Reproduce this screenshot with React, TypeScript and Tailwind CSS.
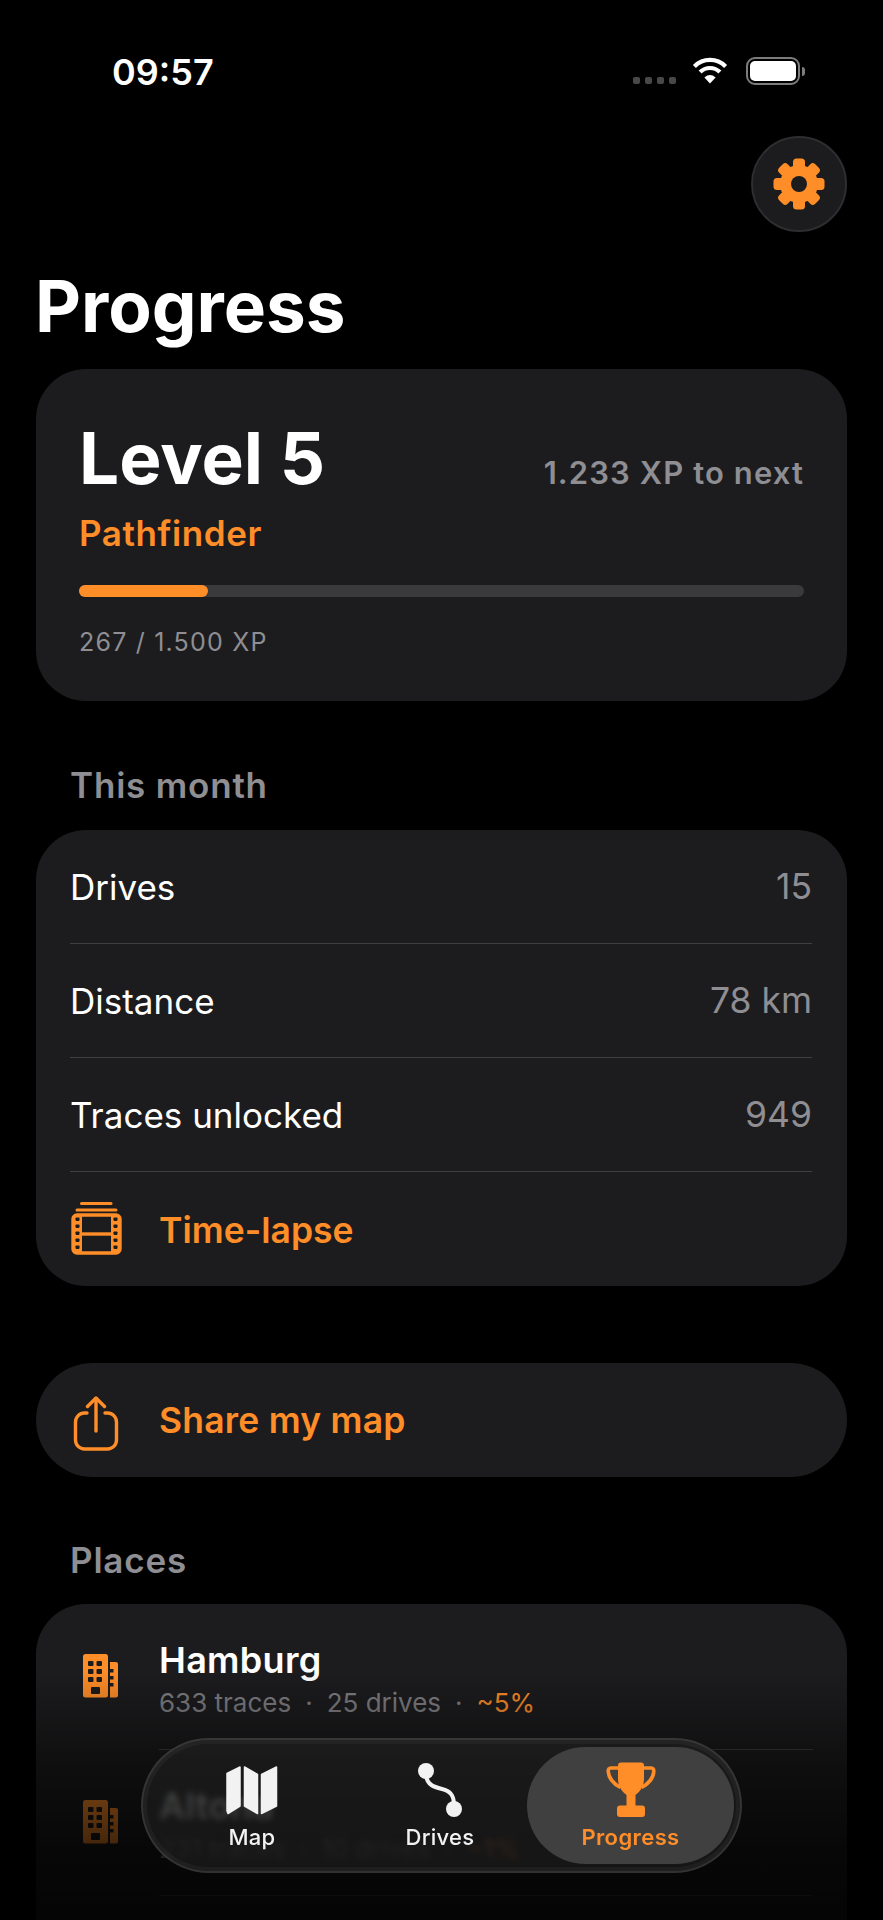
const FONT = "font-['Inter',_'Liberation_Sans',_sans-serif]";

const GearIcon = () => (
  <svg width="52" height="52" viewBox="-26 -26 52 52">
    {[0, 45, 90, 135, 180, 225, 270, 315].map((deg) => (
      <rect key={deg} x="-6" y="-25.5" width="12" height="14" rx="3.5" fill="#ff8d28" transform={`rotate(${deg})`} />
    ))}
    <circle r="19" fill="#ff8d28" />
    <circle r="8" fill="#1c1c1e" />
  </svg>
);

const WifiIcon = () => (
  <svg width="36" height="27" viewBox="0 0 36 27" fill="none">
    <path d="M2.4 9.4A22 22 0 0 1 33.6 9.4" stroke="#fff" strokeWidth="4.2" />
    <path d="M8.1 15.1A14 14 0 0 1 27.9 15.1" stroke="#fff" strokeWidth="4.2" />
    <path d="M18 26.5L12.4 20.4Q18 15.6 23.6 20.4Z" fill="#fff" />
  </svg>
);

const FilmIcon = () => (
  <svg width="52" height="54" viewBox="0 0 52 54" fill="none">
    <path d="M10.5 2.5H40" stroke="#ff8d28" strokeWidth="3" strokeLinecap="round" />
    <path d="M6 9H45" stroke="#ff8d28" strokeWidth="3" strokeLinecap="round" />
    <rect x="2" y="14" width="47" height="38" rx="4" stroke="#ff8d28" strokeWidth="3.4" />
    <rect x="2" y="14" width="9" height="38" fill="#ff8d28" />
    <rect x="40" y="14" width="9" height="38" fill="#ff8d28" />
    <path d="M11 33H40" stroke="#ff8d28" strokeWidth="3.4" />
    {[17.5, 24.5, 31.5, 38.5, 45.5].map((y) => (
      <g key={y} fill="#1c1c1e">
        <rect x="4.5" y={y - 1} width="4" height="3.4" rx="0.8" />
        <rect x="42.5" y={y - 1} width="4" height="3.4" rx="0.8" />
      </g>
    ))}
  </svg>
);

const ShareIcon = () => (
  <svg width="46" height="56" viewBox="0 0 46 56" fill="none" stroke="#ff8d28" strokeWidth="3.4" strokeLinecap="round" strokeLinejoin="round">
    <path d="M14 17H11.5A9 9 0 0 0 2.5 26V44A9 9 0 0 0 11.5 53H34.5A9 9 0 0 0 43.5 44V26A9 9 0 0 0 34.5 17H32" />
    <path d="M23 35V2.5" />
    <path d="M14.5 10.5L23 2L31.5 10.5" />
  </svg>
);

const BuildingIcon = ({ className }: { className?: string }) => (
  <svg width="36" height="44" viewBox="0 0 36 44" className={className}>
    <rect x="0" y="0" width="25" height="43.5" rx="2.5" fill="#ff8d28" />
    <path d="M27 8H33Q35 8 35 10V41.5Q35 43.5 33 43.5H27Z" fill="#ff8d28" />
    {[7, 15, 23].map((y) => (
      <g key={y} fill="#1c1c1e">
        <rect x="5" y={y} width="5.5" height="5" rx="1" />
        <rect x="13.5" y={y} width="5.5" height="5" rx="1" />
      </g>
    ))}
    <rect x="8" y="33" width="9" height="7" rx="1" fill="#1c1c1e" />
    {[15, 22, 29].map((y) => (
      <rect key={y} x="27" y={y} width="3.5" height="3.5" fill="#1c1c1e" />
    ))}
  </svg>
);

const MapIcon = () => (
  <svg width="52" height="49" viewBox="0 0 52 49" fill="#f2f2f2" stroke="#f2f2f2" strokeWidth="1.5" strokeLinejoin="round">
    <path d="M1 7.5L14 1V40L2 47.5L1 45Z" />
    <path d="M18.5 1L31.5 8.5V47.5L18.5 40Z" />
    <path d="M35.5 8.5L50.5 1V40L35.5 47.5Z" />
  </svg>
);

const DrivesIcon = () => (
  <svg width="46" height="56" viewBox="0 0 46 56" fill="none">
    <circle cx="9" cy="9" r="8" fill="#f2f2f2" />
    <circle cx="37" cy="47" r="8" fill="#f2f2f2" />
    <path d="M9 13C10 23 17 25 25 27C33 29 37 33 37 43" stroke="#f2f2f2" strokeWidth="4" />
  </svg>
);

const TrophyIcon = () => (
  <svg width="50" height="56" viewBox="0 0 50 56" fill="none">
    <path d="M12 3.5Q12 .5 15 .5H35Q38 .5 38 3.5V17C38 26 32 31 29.5 33V44H20.5V33C18 31 12 26 12 17Z" fill="#ff8d28" />
    <rect x="11" y="43.5" width="28" height="11.5" rx="3" fill="#ff8d28" />
    <path d="M12 6H5Q2 6 2.2 9.5C2.8 17 8 22 14.5 25.5" stroke="#ff8d28" strokeWidth="3.6" />
    <path d="M38 6H45Q48 6 47.8 9.5C47.2 17 42 22 35.5 25.5" stroke="#ff8d28" strokeWidth="3.6" />
  </svg>
);

const StatRow = ({ label, value }: { label: string; value: string }) => (
  <div className="flex h-[114px] items-center justify-between border-b border-[#3f3f41] pt-[2px] text-[35px]">
    <span className="text-white">{label}</span>
    <span className="text-[35.5px] text-[#8e8e93]">{value}</span>
  </div>
);

const PlaceRow = ({
  name,
  traces,
  drives,
  share,
}: {
  name: string;
  traces: number;
  drives: number;
  share: string;
}) => (
  <div className="flex h-[145px] items-start pt-[36px] pl-[47px]">
    <div className="flex h-[73px] w-[76px] items-center">
      <BuildingIcon />
    </div>
    <div>
      <p className="text-[36px] leading-[40px] font-semibold tracking-[0.3px] text-white">{name}</p>
      <p className="mt-[7px] flex text-[26px] leading-[32px] text-[#808085]">
        <span>{traces} traces</span>
        <span className="mx-[14px]">·</span>
        <span>{drives} drives</span>
        <span className="mx-[14px]">·</span>
        <span className="text-[#ff8d28]">{share}</span>
      </p>
    </div>
  </div>
);

export default function App() {
  return (
    <div className={`relative h-[1920px] w-[883px] overflow-hidden bg-black ${FONT}`}>
      {/* status bar */}
      <div className="flex h-[136px] items-start justify-between pr-[78px] pl-[112px]">
        <span className="mt-[50px] text-[36px] leading-[44px] font-semibold text-white">09:57</span>
        <div className="mt-[57px] flex items-start">
          <div className="mt-[20px] mr-[16px] flex gap-[5px]">
            <div className="h-[7px] w-[7px] rounded-[2px] bg-[#48484a]" />
            <div className="h-[7px] w-[7px] rounded-[2px] bg-[#48484a]" />
            <div className="h-[7px] w-[7px] rounded-[2px] bg-[#48484a]" />
            <div className="h-[7px] w-[7px] rounded-[2px] bg-[#48484a]" />
          </div>
          <WifiIcon />
          <div className="ml-[18px] flex items-center">
            <div className="h-[28px] w-[54px] rounded-[9px] border-2 border-[#7c7c7e] p-[2px]">
              <div className="h-full w-full rounded-[5px] bg-white" />
            </div>
            <div className="ml-[2px] h-[9px] w-[3px] rounded-r-full bg-[#7c7c7e]" />
          </div>
        </div>
      </div>

      <div className="flex justify-end pr-[36px]">
        <button className="flex h-[96px] w-[96px] items-center justify-center rounded-full border-2 border-[#2e2e30] bg-[#1c1c1e]">
          <GearIcon />
        </button>
      </div>

      <div className="px-[36px]">
        <h1 className="mt-[34px] mb-[23px] -ml-[1px] text-[71px] leading-[80px] font-bold text-white">Progress</h1>

        {/* level card */}
        <section className="rounded-[50px] bg-[#1c1c1e] px-[43px] pt-[53px] pb-[43px]">
          <div className="flex items-baseline justify-between">
            <span className="text-[71px] leading-[72px] font-bold text-white">Level 5</span>
            <span className="text-[31px] font-semibold tracking-[1.1px] text-[#8e8e93]">1.233 XP to next</span>
          </div>
          <p className="mt-[16px] text-[35px] leading-[40px] font-semibold tracking-[0.6px] text-[#ff8d28]">Pathfinder</p>
          <div className="mt-[32px] h-[12px] rounded-full bg-[#3a3a3c]">
            <div className="h-full rounded-full bg-[#ff8d28]" style={{ width: `${(267 / 1500) * 100}%` }} />
          </div>
          <p className="mt-[29px] text-[25px] leading-[32px] tracking-[1.2px] text-[#8e8e93]">267 / 1.500 XP</p>
        </section>

        <h2 className="mt-[64px] mb-[25px] pl-[34px] text-[35px] leading-[40px] font-semibold tracking-[0.8px] text-[#8e8e93]">This month</h2>
        <section className="rounded-[50px] bg-[#1c1c1e] pr-[35px] pl-[34px]">
          <StatRow label="Drives" value="15" />
          <StatRow label="Distance" value="78 km" />
          <StatRow label="Traces unlocked" value="949" />
          <div className="flex h-[114px] items-center pt-[4px] text-[35.5px] font-semibold text-[#ff8d28]">
            <div className="-mt-[6px] ml-px w-[88px]">
              <FilmIcon />
            </div>
            <span>Time-lapse</span>
          </div>
        </section>

        <section className="mt-[77px] flex h-[114px] items-center rounded-full bg-[#1c1c1e] pt-[2px] pl-[37px] text-[35.5px] font-semibold tracking-[0.2px] text-[#ff8d28]">
          <div className="mt-[6px] w-[86px]">
            <ShareIcon />
          </div>
          <span>Share my map</span>
        </section>

        <h2 className="mt-[63px] mb-[24px] pl-[34px] text-[35px] leading-[40px] font-semibold tracking-[0.8px] text-[#8e8e93]">Places</h2>
        <section className="relative rounded-[50px] bg-[#1c1c1e]">
          <PlaceRow name="Hamburg" traces={633} drives={25} share="~5%" />
          <div className="mr-[34px] ml-[123px] h-px bg-[#3f3f41]" />
          <PlaceRow name="Altona" traces={231} drives={10} share="~1%" />
          <div className="mr-[34px] ml-[123px] h-px bg-[#3f3f41]" />
          <PlaceRow name="Ottensen" traces={84} drives={6} share="~1%" />
        </section>
      </div>

      {/* fade behind the tab bar */}
      <div className="pointer-events-none absolute inset-x-0 bottom-0 h-[250px] bg-[linear-gradient(to_bottom,rgba(0,0,0,0)_0%,rgba(0,0,0,0.5)_40%,rgba(0,0,0,0.75)_72%,rgba(0,0,0,0.84)_100%)]" />

      {/* tab bar */}
      <nav className="absolute top-[1738px] left-[141px] flex h-[135px] w-[601px] rounded-full bg-[#222222]/55 py-[9px] pr-[8px] pl-[14px] shadow-[inset_0_0_0_2px_rgba(255,255,255,0.09),inset_0_0_0_6px_rgba(255,255,255,0.04)] backdrop-blur-[3px]">
        <div className="flex w-[194px] flex-col items-center pt-[15px] text-[22px] font-medium tracking-[0.3px] text-[#f2f2f2]">
          <div className="flex h-[56px] items-center">
            <MapIcon />
          </div>
          <span className="mt-[6px] leading-[26px]">Map</span>
        </div>
        <div className="flex w-[182px] flex-col items-center pt-[15px] text-[22px] font-medium tracking-[0.3px] text-[#f2f2f2]">
          <div className="flex h-[56px] items-center">
            <DrivesIcon />
          </div>
          <span className="mt-[6px] leading-[26px]">Drives</span>
        </div>
        <div className="-ml-[4px] flex w-[207px] flex-col items-center rounded-full bg-[#404040] pt-[15px] text-[22px] font-semibold tracking-[0.4px] text-[#ff8d28]">
          <div className="flex h-[56px] items-center">
            <TrophyIcon />
          </div>
          <span className="mt-[6px] leading-[26px]">Progress</span>
        </div>
      </nav>
    </div>
  );
}
